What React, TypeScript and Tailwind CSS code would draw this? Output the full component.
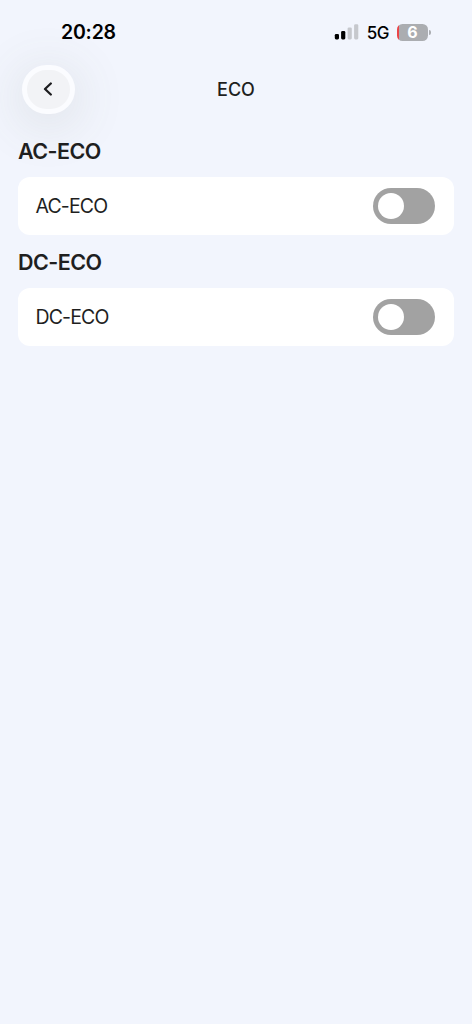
import { useState } from "react";

function StatusBar() {
  return (
    <div className="flex h-16 items-center justify-between pr-[41px] pl-[61px] text-black">
      <span className="pt-[2px] text-[19.5px] leading-none font-semibold tracking-[-0.2px]">20:28</span>
      <div className="flex items-center">
        <svg width="25" height="16" viewBox="0 0 25 16">
          <rect x="0.8" y="10" width="4.2" height="5.4" rx="1.3" fill="#000" />
          <rect x="7.1" y="7" width="4.2" height="8.4" rx="1.3" fill="#000" />
          <rect x="13.6" y="3.5" width="4.2" height="11.9" rx="1.3" fill="#c6c8cd" />
          <rect x="20.1" y="0.2" width="4.2" height="15.2" rx="1.3" fill="#c6c8cd" />
        </svg>
        <span className="ml-[8px] pt-[2px] text-[17px] leading-none font-medium tracking-[-0.5px]">5G</span>
        <div className="ml-[8px] flex items-center">
          <div className="flex h-[17px] w-[31px] items-center justify-center overflow-hidden rounded-[5.5px] bg-[linear-gradient(to_right,#ea4448_2px,#abadb1_2px)] text-[16px] leading-none font-bold text-white">
            6
          </div>
          <div className="ml-px h-[5px] w-[2px] rounded-r-full bg-[#abadb1]" />
        </div>
      </div>
    </div>
  );
}

function Switch({ on, onChange }: { on: boolean; onChange: (on: boolean) => void }) {
  return (
    <button
      type="button"
      role="switch"
      aria-checked={on}
      onClick={() => onChange(!on)}
      className={`flex h-[36px] w-[62px] items-center rounded-full px-[4.5px] ${
        on ? "justify-end bg-[#34c759]" : "justify-start bg-[#a2a2a2]"
      }`}
    >
      <span className="size-[26.5px] rounded-full bg-white" />
    </button>
  );
}

function EcoSection({ name }: { name: string }) {
  const [on, setOn] = useState(false);

  return (
    <section>
      <h2 className="flex h-[53px] items-center pt-px text-[21.5px] font-semibold tracking-[-0.55px]">{name}</h2>
      <div className="flex h-[58px] items-center justify-between rounded-[12px] bg-white pr-[19px] pl-[17.5px]">
        <span className="pt-[2px] text-[19.5px] tracking-[-0.85px]">{name}</span>
        <Switch on={on} onChange={setOn} />
      </div>
    </section>
  );
}

export default function App() {
  return (
    <div className="min-h-screen overflow-hidden bg-[#f2f5fd] font-['Inter','Liberation_Sans',sans-serif] text-[#1f1f1f]">
      <StatusBar />

      {/* Navigation */}
      <header className="grid h-[50px] grid-cols-[53px_1fr_53px] items-center px-[22px]">
        <button
          type="button"
          aria-label="Back"
          className="flex h-[49px] w-[53px] items-center justify-center rounded-full border-[5px] border-[#fbfcff] bg-[#f2f3f6] pr-[2px] shadow-[0_8px_50px_6px_rgba(90,100,80,0.12)]"
        >
          <svg width="10" height="14" viewBox="0 0 10 14" fill="none">
            <path
              d="M7.8 1.5 2 7l5.8 5.5"
              stroke="#1d1d1f"
              strokeWidth="2.3"
              strokeLinecap="round"
              strokeLinejoin="round"
            />
          </svg>
        </button>
        <h1 className="text-center text-[18px] font-medium">ECO</h1>
      </header>

      <main className="mt-[10px] px-[18px]">
        <EcoSection name="AC-ECO" />
        <EcoSection name="DC-ECO" />
      </main>
    </div>
  );
}
